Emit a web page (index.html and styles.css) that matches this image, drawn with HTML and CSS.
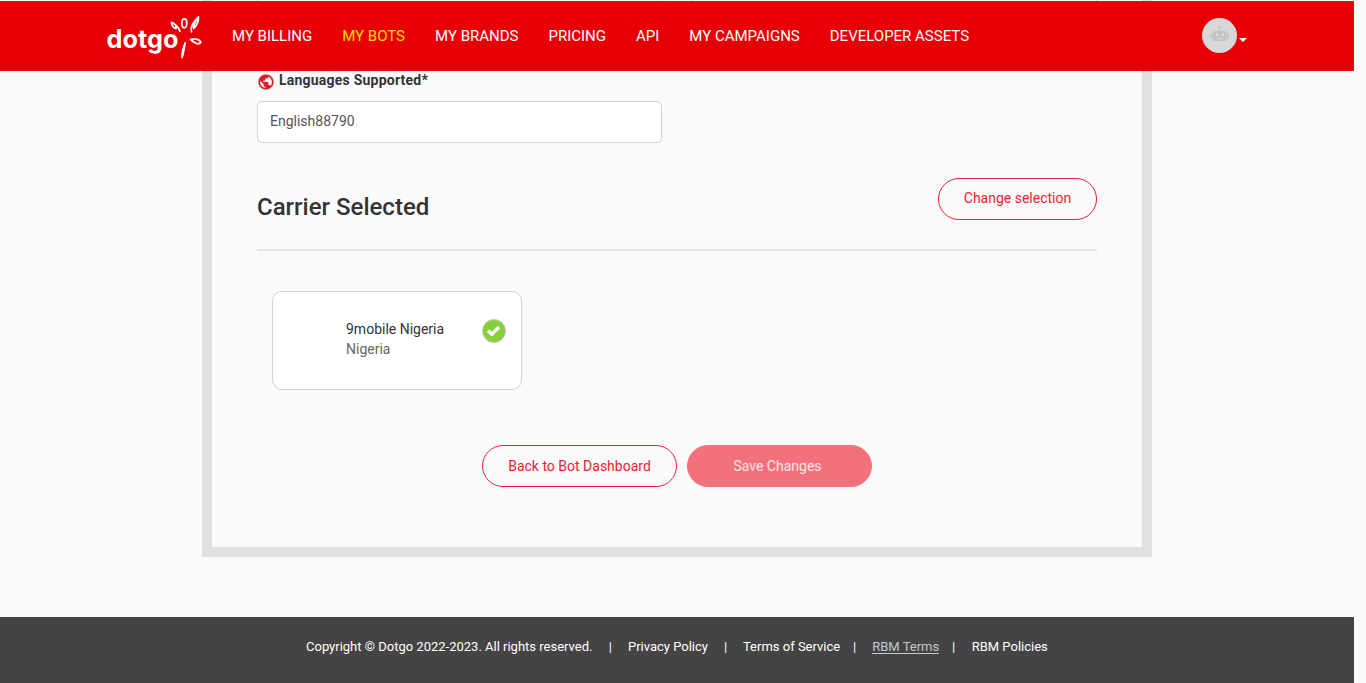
FILE: index.html
```html
<!DOCTYPE html>
<html lang="en">
<head>
<meta charset="utf-8">
<title>Dotgo</title>
<link rel="stylesheet" href="styles.css">
</head>
<body>
<div class="page">
  <header class="topbar">
    <svg class="logo" width="96" height="44" viewBox="0 0 96 44">
      <text class="logo-text" x="-0.500" y="33" textLength="72" lengthAdjust="spacingAndGlyphs">dotgo</text>
      <g class="logo-leaves">
        <path d="M73 16.500C72 12.500 68.500 9.500 64.500 7.300C64.500 10.500 66.500 13.500 69 13.500C69.500 11 67.500 8.500 64.500 7.300"/>
        <ellipse cx="77.300" cy="8.300" rx="2.500" ry="4.500"/>
        <path d="M84.500 16.800C83 12 86 7 91.500 2C91.500 7 89.500 11 86.500 13.500C86.500 10 89 5.500 91.500 2"/>
        <path d="M83.500 24.500C87 23 92.500 24 93.800 27C92 30.500 88 28.500 83.500 24.500Z"/>
        <path d="M78.300 27.800C76 32.500 75 37.500 75 42.500C77 37.500 77 32.500 78.300 27.800Z"/>
      </g>
    </svg>
    <nav class="nav">
      <a>MY BILLING</a><a class="active">MY BOTS</a><a>MY BRANDS</a><a>PRICING</a><a>API</a><a>MY CAMPAIGNS</a><a>DEVELOPER ASSETS</a>
    </nav>
    <div class="account">
      <svg width="35" height="35" viewBox="0 0 35 35">
        <circle cx="17.500" cy="17.500" r="17.500" fill="#d8d8d8"/>
        <g fill="#c2c2c2">
          <circle cx="17.500" cy="9.500" r="1.300"/>
          <path d="M17 10h1v3h-1z"/>
          <rect x="11" y="13" width="13.500" height="10" rx="1.500"/>
          <rect x="8.500" y="15.500" width="2" height="5" rx="1"/>
          <rect x="25" y="15.500" width="2" height="5" rx="1"/>
        </g>
        <g fill="#dcdcdc"><circle cx="14.800" cy="16.800" r="1.500"/><circle cx="20.600" cy="16.800" r="1.500"/><path d="M15 20.300h5.500v1H15z"/></g>
      </svg>
      <span class="caret"></span>
    </div>
  </header>
  <main class="panel">
    <div class="previous-row"><div></div><div></div></div>
    <div class="label">
      <svg width="18" height="18" viewBox="0 0 24 24"><path fill="#dc1e28" stroke="#dc1e28" stroke-width="0.300" d="M12 2C6.480 2 2 6.480 2 12s4.480 10 10 10 10-4.480 10-10S17.520 2 12 2zm-1 17.930c-3.950-.49-7-3.850-7-7.930 0-.62.080-1.210.21-1.790L9 15v1c0 1.100.9 2 2 2v1.930zm6.900-2.540c-.26-.81-1-1.390-1.900-1.390h-1v-3c0-.55-.45-1-1-1H8v-2h2c.55 0 1-.45 1-1V7h2c1.100 0 2-.9 2-2v-.41c2.930 1.190 5 4.060 5 7.410 0 2.080-.8 3.970-2.100 5.390z"/></svg>
      <span>Languages Supported*</span>
    </div>
    <div class="field">English88790</div>
    <div class="section-head">
      <h2>Carrier Selected</h2>
      <a class="btn btn-change">Change selection</a>
    </div>
    <div class="card">
      <div class="carrier"><div class="carrier-name">9mobile Nigeria</div><div class="country">Nigeria</div></div>
      <svg class="check" width="24" height="24" viewBox="0 0 24 24"><circle cx="12" cy="12" r="11.500" fill="#86d13a" stroke="#c4c8c0"/><path d="M6 11.800l3.800 3.400 7.200-7.200" fill="none" stroke="#fff" stroke-width="3.300"/></svg>
    </div>
    <div class="actions">
      <a class="btn btn-back">Back to Bot Dashboard</a>
      <a class="btn btn-save">Save Changes</a>
    </div>
  </main>
  <footer class="footer">
    <span class="copy">Copyright © Dotgo 2022-2023. All rights reserved.</span><span class="sep s1">|</span><a class="privacy">Privacy Policy</a><span class="sep s2">|</span><a class="terms">Terms of Service</a><span class="sep s3">|</span><a class="rbm">RBM Terms</a><span class="sep s4">|</span><a>RBM Policies</a>
  </footer>
</div>
</body>
</html>
```
FILE: styles.css
```css
* { box-sizing: border-box; }
body {
  margin: 0;
  background: #fafafa;
  font-family: Roboto, sans-serif;
  font-size: 14px;
  color: #333;
  overflow: hidden;
}
.page { width: 1354px; height: 683px; display: flex; flex-direction: column; }
.topbar {
  position: fixed;
  top: 1px;
  left: 0;
  width: 1354px;
  height: 70px;
  background: #e60005;
  display: flex;
  align-items: center;
  padding: 0 107px;
}
.logo { overflow: visible; margin-top: 2px; }
.logo-text { font: 700 25px Inter, sans-serif; fill: #fff; }
.logo-leaves { fill: none; stroke: #fff; stroke-width: 1.7; stroke-linejoin: round; stroke-linecap: round; }
.nav { display: flex; gap: 30px; margin-left: 29px; font-size: 15px; color: #fff; white-space: nowrap; }
.nav .active { color: #ffdc00; }
.account { display: flex; align-items: center; gap: 2px; margin: 0 0 2px auto; }
.account svg { display: block; }
.caret { border: 4px solid transparent; border-top-color: #fff; border-bottom: 0; margin-top: 10px; }
.panel {
  width: 950px;
  height: 557px;
  margin: 0 auto;
  flex: none;
  border: 10px solid #e0e0e0;
  border-top: 0;
  padding: 0 45px;
}
.previous-row { display: flex; justify-content: space-between; height: 1px; margin-bottom: 70px; }
.previous-row div { width: 405px; border: solid #d2d2d2; border-width: 0 1px; }
.label { display: flex; height: 18px; line-height: 18px; gap: 4px; font-weight: 700; letter-spacing: 0.22px; }
.label svg { margin-top: 2px; }
.field {
  width: 405px;
  height: 42px;
  margin-top: 12px;
  padding: 0 12px;
  line-height: 38px;
  border: 1px solid #d2d2d2;
  border-radius: 5px;
  background: #fff;
  color: #555;
}
.section-head {
  display: flex;
  justify-content: space-between;
  align-items: flex-start;
  height: 73px;
  margin-top: 35px;
  border-bottom: 2px solid #e6e6e6;
}
h2 { margin: 14px 0 0; font-size: 24px; line-height: 30px; font-weight: 500; }
.btn { height: 42px; border: 1px solid #eb2337; border-radius: 21px; color: #eb2337; text-align: center; line-height: 40px; }
.btn-change { width: 159px; line-height: 38px; }
.card {
  display: flex;
  justify-content: space-between;
  width: 250px;
  height: 99px;
  margin: 40px 0 0 15px;
  padding: 27px 15px 0 73px;
  border: 1px solid #d2d2d2;
  border-radius: 10px;
  background: #fff;
  line-height: 20px;
}
.country { color: #666; }
.actions { display: flex; justify-content: center; gap: 10px; margin-top: 55px; }
.btn-back { width: 195px; }
.btn-save { width: 185px; padding-right: 4px; background: #f3717c; border-color: #f3717c; color: #fde3e5; }
.footer {
  display: flex;
  height: 66px;
  margin-top: 60px;
  padding: 20px 0 0 306px;
  background: #444;
  color: #fff;
  font-size: 13px;
  line-height: 20px;
  white-space: nowrap;
}
.sep { width: 4px; text-align: center; }
.s1 { margin: 0 15.5px 0 16px; }
.s2 { margin: 0 15.5px; }
.s3 { margin: 0 15.5px 0 12.5px; }
.s4 { margin: 0 16px 0 12.5px; }
.rbm { color: #c8c8c8; height: 17px; line-height: 20px; border-bottom: 1px solid #c8c8c8; }
```
